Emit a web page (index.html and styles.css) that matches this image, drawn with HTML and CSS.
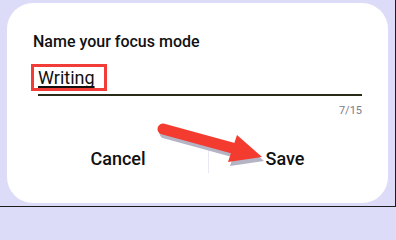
FILE: index.html
```html
<!DOCTYPE html>
<html>
<head>
<meta charset="utf-8">
<link rel="stylesheet" href="styles.css">
</head>
<body>
<div class="frame">
  <div class="card">
    <h1 class="title">Name your focus mode</h1>
    <div class="field">
      <span class="value">Writing</span>
      <span class="mark"></span>
    </div>
    <div class="counter">7/15</div>
    <div class="actions">
      <button class="btn cancel">Cancel</button>
      <span class="divider"></span>
      <button class="btn save">Save</button>
    </div>
  </div>
</div>
<svg class="arrow" width="396" height="207" viewBox="0 0 396 207">
  <g class="shadow" transform="translate(2 4)">
    <line x1="163" y1="129" x2="236" y2="149" stroke-width="11" stroke-linecap="round"/>
    <polygon points="237,135 262,157 228,162"/>
  </g>
  <g class="red">
    <line x1="163" y1="129" x2="236" y2="149" stroke-width="11" stroke-linecap="round"/>
    <polygon points="237,135 262,157 228,162"/>
  </g>
</svg>
</body>
</html>
```
FILE: styles.css
```css
* { box-sizing: border-box; }
html { background: #dcdcf8; }
html, body { margin: 0; padding: 0; }
body {
  width: 396px;
  height: 207px;
  background: #dcdcf8;
  position: relative;
  overflow: hidden;
  font-family: Roboto, "Liberation Sans", sans-serif;
  color: #111;
}
.frame {
  width: 396px;
  height: 207px;
  border-right: 1px solid #1c1c1c;
  border-bottom: 1px solid #1c1c1c;
  padding: 3px 7px 3px 7px;
}
.card {
  background: #fff;
  border-radius: 26px;
  height: 200px;
  padding: 29px 26px 0 26px;
  position: relative;
}
.title {
  margin: 0;
  font-size: 16px;
  font-weight: 500;
  line-height: 20px;
  letter-spacing: 0;
}
.field {
  position: relative;
  margin: 16px 0 0 5px;
  width: 324px;
  height: 28px;
  padding-bottom: 6px;
  border-bottom: 2px solid #2a2a18;
  display: flex;
  align-items: flex-end;
}
.value {
  font-size: 18px;
  line-height: 20px;
  text-decoration: underline;
  text-decoration-thickness: 1.5px;
  text-underline-offset: 2px;
  text-decoration-skip-ink: none;
}
.mark {
  position: absolute;
  left: -7px;
  top: -4px;
  width: 76px;
  height: 27px;
  border: 3px solid #f23c38;
}
.counter {
  width: 329px;
  text-align: right;
  font-size: 11px;
  line-height: 14px;
  color: #7a7a8c;
  margin-top: 8px;
}
.actions {
  display: flex;
  align-items: center;
  margin: 26px 0 0 2px;
  height: 30px;
}
.btn {
  border: 0;
  background: none;
  padding: 0;
  font-family: inherit;
  font-size: 18px;
  font-weight: 500;
  color: #111;
  text-align: center;
  line-height: 30px;
}
.cancel { width: 166px; }
.save { width: 152px; }
.divider {
  width: 1px;
  height: 28px;
  background: #e8e8f4;
  margin: 0 0 0 7px;
}
.arrow {
  position: absolute;
  left: 0;
  top: 0;
  pointer-events: none;
}
.shadow line { stroke: #b4b4c4; }
.shadow polygon { fill: #b4b4c4; }
.red line { stroke: #f43b2f; }
.red polygon { fill: #f43b2f; }
```
